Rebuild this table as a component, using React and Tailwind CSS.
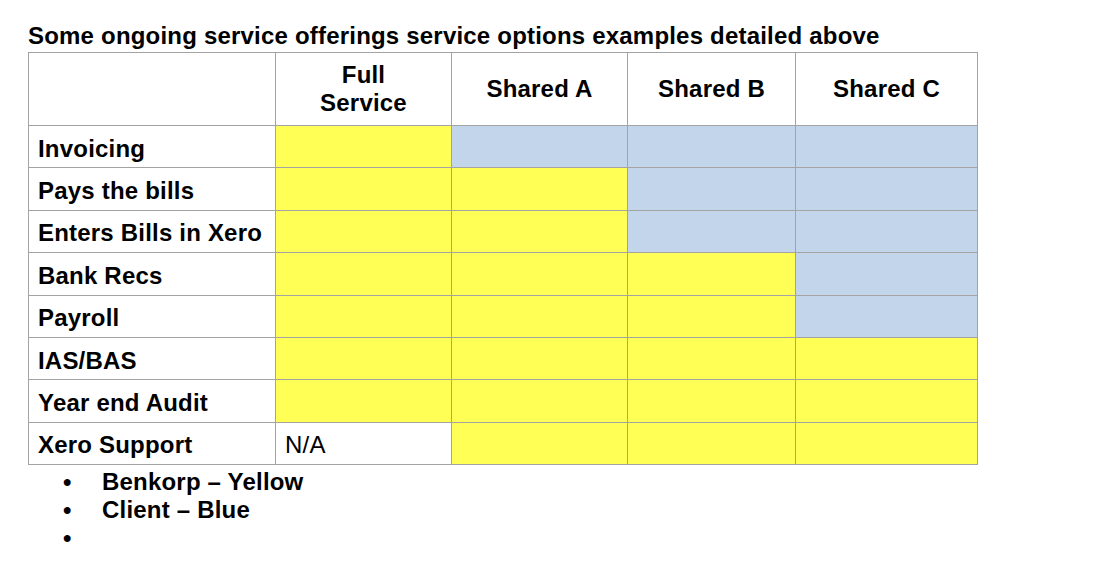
import React from "react";

const Y = "bg-[#ffff55]";
const B = "bg-[#c3d5ea]";

const rows = [
  ["Invoicing", [Y, B, B, B]],
  ["Pays the bills", [Y, Y, B, B]],
  ["Enters Bills in Xero", [Y, Y, B, B]],
  ["Bank Recs", [Y, Y, Y, B]],
  ["Payroll", [Y, Y, Y, B]],
  ["IAS/BAS", [Y, Y, Y, Y]],
  ["Year end Audit", [Y, Y, Y, Y]],
  ["Xero Support", ["na", Y, Y, Y]],
];

export default function App() {
  return (
    <div className="w-[1104px] h-[574px] bg-white text-black font-['Liberation_Sans',Arial,sans-serif] tracking-[0.2px] pl-[28px] pt-[22px]">
      <h1 className="text-[24px] font-bold leading-[28px]">
        Some ongoing service offerings service options examples detailed above
      </h1>
      <table className="border-collapse table-fixed w-[949px] mt-[2px]">
        <colgroup>
          <col className="w-[247px]" />
          <col className="w-[176px]" />
          <col className="w-[176px]" />
          <col className="w-[168px]" />
          <col className="w-[182px]" />
        </colgroup>
        <thead>
          <tr className="h-[73px]">
            <th className="border border-[#a3a3a3]" />
            <th className="border border-[#a3a3a3] text-[24px] font-bold leading-[28px] text-center">
              Full
              <br />
              Service
            </th>
            {["Shared A", "Shared B", "Shared C"].map((h) => (
              <th key={h} className="border border-[#a3a3a3] text-[24px] font-bold leading-[28px] text-center whitespace-nowrap">
                {h}
              </th>
            ))}
          </tr>
        </thead>
        <tbody>
          {rows.map(([label, cells]) => (
            <tr key={label} className="h-[42.4px]">
              <td className="border border-[#a3a3a3] text-[24px] font-bold pl-[9px] pt-[4px] leading-[24px] whitespace-nowrap">{label}</td>
              {cells.map((c, i) =>
                c === "na" ? (
                  <td key={i} className="border border-[#a3a3a3] text-[24px] pl-[9px] pt-[4px] leading-[24px]">N/A</td>
                ) : (
                  <td key={i} className={`border border-[#a3a3a3] ${c}`} />
                )
              )}
            </tr>
          ))}
        </tbody>
      </table>
      <ul className="mt-[3px] text-[24px] font-bold leading-[28px]">
        {["Benkorp – Yellow", "Client – Blue", ""].map((t, i) => (
          <li key={i} className="flex items-center h-[28px]">
            <span className="w-[74px] pl-[35px] text-[24px]">•</span>
            <span>{t}</span>
          </li>
        ))}
      </ul>
    </div>
  );
}
